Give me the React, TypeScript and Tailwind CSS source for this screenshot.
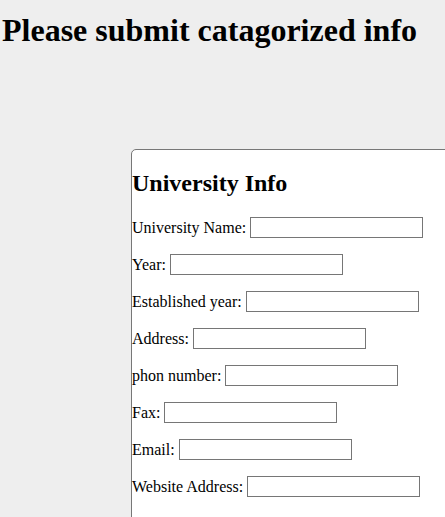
import React from "react";

const rows = [
  "University Name:",
  "Year:",
  "Established year:",
  "Address:",
  "phon number:",
  "Fax:",
  "Email:",
  "Website Address:",
];

export default function App() {
  return (
    <div
      className="w-[445px] h-[517px] overflow-hidden bg-[#eeeeee] text-black flex flex-col"
      style={{ fontFamily: '"Liberation Serif", "Times New Roman", serif' }}
    >
      <h1 className="pt-[12px] pl-[2px] text-[32px] leading-[37px] font-bold whitespace-nowrap">
        Please submit catagorized info
      </h1>
      <div className="mt-[100px] ml-[131px] w-[400px] shrink-0 bg-white border border-[#777777] rounded-tl-[5px] flex flex-col">
        <h2 className="mt-[19px] mb-[20px] text-[24px] leading-[28px] font-bold whitespace-nowrap">
          University Info
        </h2>
        <div className="flex flex-col gap-[16px] pb-[40px]">
          {rows.map((r) => (
            <div key={r} className="flex items-center gap-[4px] h-[21px] text-[16px] whitespace-nowrap">
              <span>{r}</span>
              <input
                type="text"
                className="w-[173px] h-[21px] border border-[#767676] bg-white px-[2px] text-[13px]"
              />
            </div>
          ))}
        </div>
      </div>
    </div>
  );
}
